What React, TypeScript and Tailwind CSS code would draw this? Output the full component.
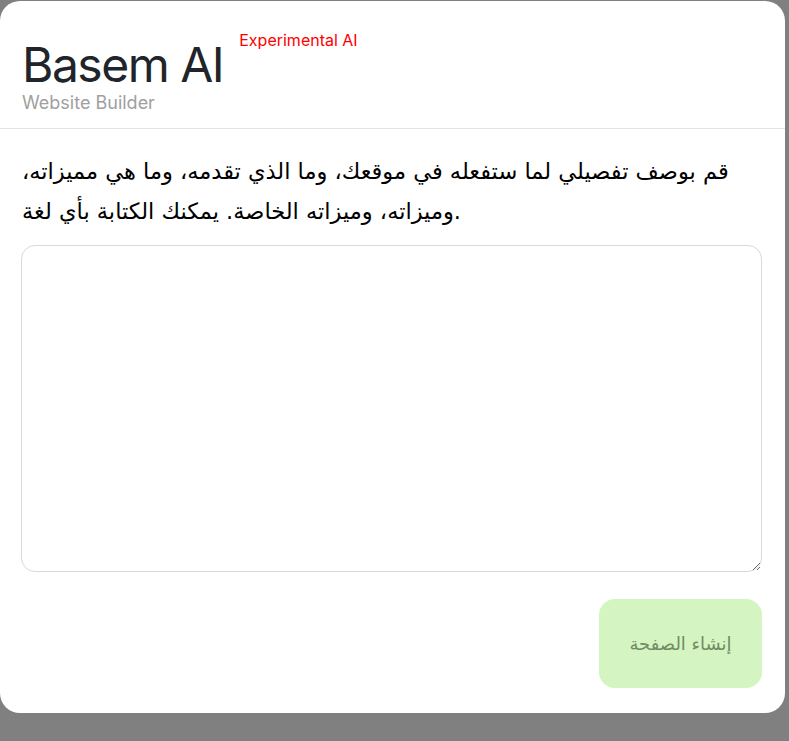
export default function App() {
  return (
    <div className="min-h-screen w-full bg-[#808080] pt-[1px]">
      <div className="flex h-[712px] w-[785px] flex-col rounded-[20px] bg-white">
        {/* header */}
        <div className="border-b border-[#e2e3e5] px-[22px] pb-[14px] pt-[40px]">
          <div className="flex items-start">
            <h1 className="font-['Inter',sans-serif] text-[48px] font-normal leading-[48px] tracking-[-1.5px] text-[#212529]">
              Basem AI
            </h1>
            <span className="ml-[16px] mt-[-11px] font-['Inter',sans-serif] text-[16px] leading-[20px] text-[#ff0000]">
              Experimental AI
            </span>
          </div>
          <p className="mt-[3px] font-['Inter',sans-serif] text-[18px] leading-[22px] text-[#a0a0a0]">
            Website Builder
          </p>
        </div>

        {/* body */}
        <div className="flex flex-1 flex-col pl-[21px] pr-[23px] pt-[22px]">
          <p className="pl-[1px] font-['DejaVu_Sans','Liberation_Sans',sans-serif] text-[22.5px] leading-[40px] text-black">
            قم بوصف تفصيلي لما ستفعله في موقعك، وما الذي تقدمه، وما هي مميزاته، وميزاته، وميزاته الخاصة. يمكنك الكتابة بأي لغة.
          </p>
          <textarea
            className="mt-[14px] h-[327px] w-[741px] resize-y rounded-[14px] border border-[#d8d8e0] bg-white p-3 font-['Inter',sans-serif] text-[16px] outline-none"
          />
          <div className="mt-[27px] flex justify-end">
            <button
              disabled
              className="h-[89px] w-[163px] rounded-[16px] bg-[#d4f4c1] font-['DejaVu_Sans','Liberation_Sans',sans-serif] text-[18px] text-[#6f8c63]"
            >
              إنشاء الصفحة
            </button>
          </div>
        </div>
      </div>
    </div>
  )
}
